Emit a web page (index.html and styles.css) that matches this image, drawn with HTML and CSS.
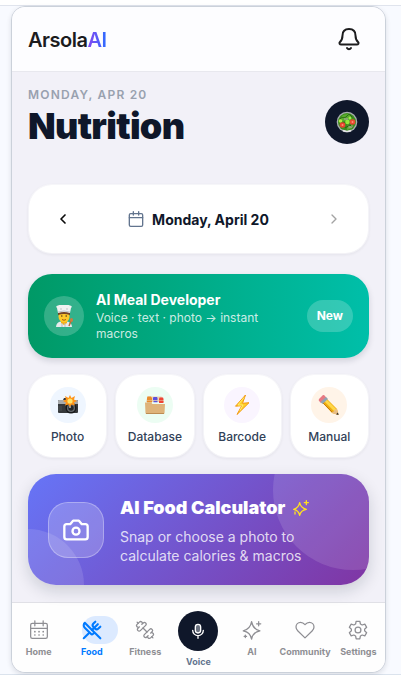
FILE: index.html
```html
<!DOCTYPE html>
<html lang="en">
<head>
<meta charset="UTF-8">
<meta name="viewport" content="width=device-width, initial-scale=1.0">
<title>ArsolaAI - Nutrition</title>
<link rel="stylesheet" href="styles.css">
</head>
<body>
<div class="stage">
<div class="app">
  <header class="topbar">
    <a class="logo" href="#">Arsola<span>AI</span></a>
    <button class="icon-btn" aria-label="Notifications">
      <svg width="24" height="24" viewBox="0 0 24 24" class="line bell"><path d="M4.200 17.400h15.600c1.600 0 2.200-1.200 1.400-2.200C19.400 13.500 18.500 12 18.500 8.500 18.500 4 15.800 2 12 2S5.500 4 5.500 8.500c0 3.500-.9 5-2.700 6.700-.8 1-.2 2.200 1.400 2.200z"/><path d="M10 21c.5.800 1.200 1.200 2 1.200s1.500-.4 2-1.200"/></svg>
    </button>
  </header>

  <main class="content">
    <div class="heading">
      <div>
        <p class="today">MONDAY, APR 20</p>
        <h1>Nutrition</h1>
      </div>
      <button class="avatar" aria-label="Meals">
        <svg width="22" height="22" viewBox="0 0 22 22">
          <circle cx="11" cy="11" r="10.300" fill="#a9adb0"/>
          <circle cx="11" cy="11" r="9" fill="#3c8d1d"/>
          <path d="M3 9l4-5 5-1 4 3-3 4-6 2z" fill="#58ad2c"/>
          <path d="M12 13l5-4 2 3-3 5-5 2z" fill="#68a83c"/>
          <path d="M4 8c2-3 5 0 7-3s4-1 5 2M5 11c3 1 4-1 6 1s4 0 7 2M9 17l5-3 3 3" fill="none" stroke="#265f14"/>
          <circle cx="4.500" cy="10" r="1.800" fill="#b5eb48"/>
          <circle cx="11.500" cy="11" r="2.300" fill="#93e83b"/>
          <circle cx="14" cy="7" r="1.500" fill="#9dec46"/>
          <circle cx="6.500" cy="14" r="2.800" fill="#e8432e"/><circle cx="6.500" cy="14" r="1" fill="#ff9175"/>
          <circle cx="16.500" cy="11" r="2.800" fill="#ea4930"/><circle cx="16.500" cy="11" r="1" fill="#ff9175"/>
          <path d="M12.500 16h4M8 8h4" stroke="#97a581" stroke-width="1.500"/>
          <path d="M7 19.500q4 1.800 8 0" fill="none" stroke="#e5e6e7" stroke-width="1.500"/>
        </svg>
      </button>
    </div>

    <section class="date-card">
      <button class="icon-btn" aria-label="Previous day"><svg width="16" height="16" viewBox="0 0 24 24" class="line arrow"><path d="M15 18l-6-6 6-6"/></svg></button>
      <div class="date">
        <svg width="16" height="16" viewBox="0 0 24 24" class="line cal"><rect x="2" y="4" width="20" height="19" rx="2"/><path d="M8 1v5M16 1v5M2 10h20"/></svg>
        <span>Monday, April 20</span>
      </div>
      <button class="icon-btn" aria-label="Next day" disabled><svg width="16" height="16" viewBox="0 0 24 24" class="line arrow"><path d="M9 18l6-6-6-6"/></svg></button>
    </section>

    <a class="meal-card" href="#">
      <span class="chef">
        <svg width="22" height="22" viewBox="0 0 22 22">
          <path d="M3 22q.3-5 5-5.500h6q4.700.5 5 5.500z" fill="#e8eaec"/>
          <path d="M8 15h6v3l-3 2-3-2z" fill="#f5ad12"/>
          <ellipse cx="11" cy="11.500" rx="5.500" ry="6" fill="#ffc928"/>
          <path d="M5 6h12v4q-6-2-12 0z" fill="#754526"/>
          <path d="M5 8L4 3Q2 1 5 .600 8-1 11 0q3-1 6 .600 3 .400 1 2.400l-1 5q-6-2-12 0z" fill="#f1f1f1"/>
          <path d="M5 7q6-2 12 0M8 3v2M14 3v2" stroke="#bfc5c8" fill="none"/>
          <circle cx="8.800" cy="11" r=".8" fill="#563817"/><circle cx="13.200" cy="11" r=".8" fill="#563817"/>
          <path d="M9 14.500q2 1.500 4 0" stroke="#a55813" fill="none"/>
          <path d="M16 21l2-5" stroke="#b76b34" stroke-width="1.500"/><ellipse cx="18.500" cy="15" rx="1.500" ry="2" fill="#d17a3e"/>
          <path d="M9 18v4M12 18v4" stroke="#b6bbc0"/>
        </svg>
      </span>
      <span class="meal-text">
        <strong>AI Meal Developer</strong>
        <small>Voice · text · photo → instant macros</small>
      </span>
      <span class="badge">New</span>
    </a>

    <div class="quick">
      <button>
        <span class="dot blue"><svg width="22" height="22" viewBox="0 0 22 22">
          <path d="M1 7q0-1 1-1h4l1-2h8l1 2h4q1 0 1 1v11q0 1-1 1H2q-1 0-1-1z" fill="#35383b"/>
          <path d="M1 7q0-1 1-1h18q1 0 1 1v3H1z" fill="#a8abad"/>
          <circle cx="14" cy="14" r="5.500" fill="#17191b"/><circle cx="14" cy="14" r="4" fill="#666b70"/><circle cx="14" cy="14" r="2.700" fill="#22262a"/><circle cx="13" cy="13" r="1" fill="#abb5bd"/>
          <path d="M13 1l1.500 3L18 2l-1 3.500 3 1.500-3 1.500 1 3-3.500-1L13 13l-1.500-2.500-3.500 1 1-3L6 7l3-1.500L8 2l3.500 2z" fill="#ff9417"/><circle cx="13" cy="7" r="2.600" fill="#ffe36a"/>
          <path d="M2 12v5M4 12v5" stroke="#4d5053"/>
        </svg></span>Photo
      </button>
      <button>
        <span class="dot green"><svg width="22" height="22" viewBox="0 0 22 22">
          <path d="M2 8l1.500-5.500h14L20 8z" fill="#e9d3b4"/>
          <path d="M3 4l.5-1.500H7L8 4v2H3z" fill="#e98c2d"/><path d="M9 4l.5-1H13l.5 1v2H9z" fill="#5a50dd"/><path d="M15 5l.5-1.500H19l.5 1.500v1.500H15z" fill="#ee4536"/>
          <path d="M3 7.500h5" stroke="#e98c2d" stroke-width="2"/><path d="M9.500 7.500h4" stroke="#5a50dd" stroke-width="1.500"/><path d="M15 8h4.500" stroke="#ee4536" stroke-width="2"/>
          <path d="M1 8.500h6l1.500 1.500H21l-.5 9.500h-19z" fill="#deb37a"/><path d="M2 19.500h18" stroke="#bd8c53"/>
        </svg></span>Database
      </button>
      <button>
        <span class="dot purple"><svg width="22" height="22" viewBox="0 0 22 22"><path d="M14.500 1L4.500 12.200l6.300-.5L6 20.500 18 8.700l-6.500.6z" fill="#ffce27" stroke="#f39a13" stroke-linejoin="round"/><path d="M13 3.500L7 11h5L9 16.500" fill="none" stroke="#fff070"/></svg></span>Barcode
      </button>
      <button>
        <span class="dot orange"><svg width="22" height="22" viewBox="0 0 22 22">
          <path d="M6 2l13 13 1.500 6L14 19 2 6z" fill="#eda90e"/><path d="M5 4l13 13" stroke="#ffd746" stroke-width="3"/><path d="M3 7l12 12" stroke="#c67b08"/>
          <path d="M19 15l1.500 6L14 19q0-2 2-1.500Q16 15 19 15z" fill="#e9be87"/><path d="M20 18.500l.5 2.500-2.500-.8z" fill="#302b27"/>
          <path d="M5 1L1 5q-1 1 .5 2.500L3 9l5.500-5L7 2Q6 .500 5 1z" fill="#e77982"/><path d="M2.500 8l5.500-5 2 2-5.500 5z" fill="#8fa3b2"/>
        </svg></span>Manual
      </button>
    </div>

    <a class="calc-card" href="#">
      <span class="camera"><svg width="28" height="28" viewBox="0 0 24 24" class="line"><path d="M14.500 4h-5L7 7H4a2 2 0 0 0-2 2v9a2 2 0 0 0 2 2h16a2 2 0 0 0 2-2V9a2 2 0 0 0-2-2h-3z"/><circle cx="12" cy="13" r="3"/></svg></span>
      <span class="calc-text">
        <strong>AI Food Calculator
          <svg width="16" height="16" viewBox="0 0 24 24" class="line spark"><path d="M10 4q1.500 8 10 10-8.500 1.500-10 9-1.500-7.500-9-9 7.500-2 9-10zM20 1v6M17 4h6M3 18v3"/></svg>
        </strong>
        <span>Snap or choose a photo to calculate calories &amp; macros</span>
      </span>
    </a>
  </main>

  <nav class="tabs">
    <a href="#"><span class="tab-icon"><svg width="20" height="20" viewBox="0 0 24 24" class="line"><rect x="2" y="4" width="20" height="18" rx="2"/><path d="M7 1v6M17 1v6M2 10h20"/><path d="M7 14h.1M12 14h.1M17 14h.1M7 18h.1M12 18h.1M17 18h.1" stroke-width="2"/></svg></span>Home</a>
    <a href="#" class="active"><span class="tab-icon"><svg width="20" height="20" viewBox="0 0 24 24" class="line"><path d="M16 2l-2.300 2.300a3 3 0 0 0 0 4.200l1.800 1.800a3 3 0 0 0 4.200 0L22 8"/><path d="M15 15L3.300 3.300a4.200 4.200 0 0 0 0 6l7.300 7.300c.7.700 2 .7 2.800 0L15 15zm0 0l7 7"/><path d="M2.100 21.800l6.400-6.300M19 5l-7 7"/></svg></span>Food</a>
    <a href="#"><span class="tab-icon"><svg width="20" height="20" viewBox="0 0 24 24" class="line"><g transform="matrix(-1 0 0 1 24 0)"><path d="M17.600 12.800a2 2 0 1 0 2.800-2.900l-1.700-1.700a2 2 0 0 0 2.800-2.900l-2.800-2.800a2 2 0 0 0-2.900 2.800l-1.700-1.700a2 2 0 1 0-2.900 2.800z"/><path d="M2.500 21.500l1.400-1.400M20.100 3.900l1.400-1.400"/><path d="M5.300 21.500a2 2 0 1 0 2.900-2.800l1.700 1.700a2 2 0 1 0 2.900-2.800l-6.400-6.400a2 2 0 1 0-2.800 2.900l1.700 1.700a2 2 0 0 0-2.800 2.900z"/><path d="M9.600 14.400l4.800-4.800"/></g></svg></span>Fitness</a>
    <a href="#" class="voice"><span class="mic"><svg width="16" height="16" viewBox="0 0 24 24" class="line"><rect x="8" y="2" width="8" height="13" rx="4" fill="#6b7280"/><path d="M4 11a8 8 0 0 0 16 0M12 19v4"/></svg></span>Voice</a>
    <a href="#"><span class="tab-icon"><svg width="20" height="20" viewBox="0 0 24 24" class="line"><path d="M11.500 2q1.500 9 10 11-8.500 1.500-10 10-1.500-8.500-10-10 8.500-2 10-11zM20 2v5M17.500 4.500h5M4 18v3M2.500 19.500h3"/></svg></span>AI</a>
    <a href="#"><span class="tab-icon"><svg width="20" height="20" viewBox="0 0 24 24" class="line"><path d="M12 21.500l-8.500-8.300C1.800 11.500 1.200 10 1.200 8.300c0-3.200 2.500-5.600 5.500-5.600 2.200 0 3.600.9 5.300 2.900 1.700-2 3.100-2.900 5.300-2.900 3 0 5.500 2.400 5.500 5.600 0 1.700-.6 3.200-2.300 4.900z"/></svg></span>Community</a>
    <a href="#"><span class="tab-icon"><svg width="20" height="20" viewBox="0 0 24 24" class="line"><path d="M9.800 1.500h4.400l.7 3.300 2.100 1.200 3.200-1 2.200 3.800-2.500 2.200v2l2.500 2.200-2.200 3.800-3.200-1-2.100 1.200-.7 3.300H9.800l-.7-3.300L7 18l-3.200 1-2.200-3.800L4.100 13v-2L1.600 8.800 3.800 5 7 6l2.100-1.200z"/><circle cx="12" cy="12" r="3.500"/></svg></span>Settings</a>
  </nav>
</div>
</div>
</body>
</html>
```
FILE: styles.css
```css
* {
  box-sizing: border-box;
}
body {
  margin: 0;
  padding: 5px 0 0;
  background: #fff;
  color: #0f172a;
  font-family: Inter, "Liberation Sans", sans-serif;
}
a {
  color: inherit;
  text-decoration: none;
}
button {
  font-family: inherit;
  color: inherit;
  border: none;
  padding: 0;
  cursor: pointer;
}
svg {
  display: block;
  flex: none;
}
.line {
  fill: none;
  stroke: currentColor;
  stroke-width: 2;
  stroke-linecap: round;
  stroke-linejoin: round;
}
.stage {
  padding: 0 15px 1px 11px;
  background: #f8faff;
  border-top: 1px solid #e0e4ed;
  border-bottom: 1px solid #dbe3ed;
  box-shadow: 0 8px 0 #f8faff;
}
.app {
  overflow: hidden;
  background: #f2f1f8;
  border: 1px solid #cbd1da;
  border-radius: 14px;
  box-shadow: 0 2px 5px rgba(15, 23, 42, 0.12);
}

/* header */
.topbar {
  display: flex;
  align-items: center;
  justify-content: space-between;
  height: 65px;
  padding: 0 16px;
  background: #fdfdff;
  border-bottom: 1px solid #e8e8ee;
}
.logo {
  padding-top: 2px;
  font-size: 20px;
  font-weight: 600;
  letter-spacing: -0.5px;
  color: #1c1c1e;
}
.logo span {
  background: linear-gradient(to right, #8b45ef, #2f6bff);
  background-clip: text;
  color: transparent;
}
.icon-btn {
  display: flex;
  align-items: center;
  justify-content: center;
  width: 40px;
  height: 40px;
  background: none;
}
.bell {
  color: #1c1c1e;
}

/* page content */
.content {
  display: flex;
  flex-direction: column;
  gap: 16px;
  padding: 15px 16px 17px;
}
.heading {
  display: flex;
  align-items: flex-end;
  justify-content: space-between;
  margin-bottom: 24px;
}
.today {
  margin: 0;
  font-size: 12px;
  line-height: 16px;
  font-weight: 600;
  letter-spacing: 1.2px;
  color: #99a1af;
}
h1 {
  margin: 5px 0 0;
  font-size: 36px;
  line-height: 36px;
  font-weight: 900;
  letter-spacing: -0.7px;
}
.avatar {
  display: flex;
  align-items: center;
  justify-content: center;
  width: 44px;
  height: 44px;
  border-radius: 50%;
  background: #0f172a;
}
.date-card {
  display: flex;
  align-items: center;
  justify-content: space-between;
  height: 70px;
  padding: 0 14px;
  margin-bottom: 4px;
  background: #fff;
  background-clip: padding-box;
  border: 1px solid rgba(255, 255, 255, 0.5);
  border-radius: 24px;
  box-shadow: 0 1px 3px rgba(15, 23, 42, 0.06);
}
.arrow {
  stroke-width: 2.5;
  color: #0a0a0a;
}
.icon-btn:disabled .arrow {
  stroke-width: 2;
  color: #a3a3a3;
}
.date {
  display: flex;
  align-items: center;
  gap: 8px;
  font-size: 14px;
  font-weight: 700;
}
.cal {
  color: #62748e;
}

/* AI meal developer */
.meal-card {
  display: flex;
  align-items: center;
  gap: 12px;
  padding: 16px;
  background: linear-gradient(to right, #009966, #00bfa9);
  border-radius: 24px;
  color: #fff;
  box-shadow: 0 3px 6px rgba(15, 23, 42, 0.14);
}
.chef {
  display: flex;
  flex: none;
  align-items: center;
  justify-content: center;
  width: 40px;
  height: 40px;
  border-radius: 50%;
  background: rgba(255, 255, 255, 0.2);
}
.meal-text {
  flex: 1;
}
.meal-text strong {
  display: block;
  font-size: 14px;
  line-height: 20px;
  font-weight: 700;
}
.meal-text small {
  display: block;
  font-size: 12px;
  line-height: 16px;
  color: rgba(255, 255, 255, 0.8);
}
.badge {
  padding: 8px 10px;
  border-radius: 16px;
  background: rgba(255, 255, 255, 0.2);
  font-size: 12px;
  line-height: 16px;
  font-weight: 700;
}

/* quick actions */
.quick {
  display: grid;
  grid-template-columns: repeat(4, 1fr);
  gap: 8px;
}
.quick button {
  display: flex;
  flex-direction: column;
  align-items: center;
  gap: 6px;
  padding: 12px 0;
  background: #fff;
  background-clip: padding-box;
  border: 1px solid rgba(255, 255, 255, 0.5);
  border-radius: 24px;
  box-shadow: 0 1px 3px rgba(15, 23, 42, 0.06);
  font-size: 12px;
  line-height: 16px;
  font-weight: 500;
  color: #314158;
}
.dot {
  display: flex;
  align-items: center;
  justify-content: center;
  width: 36px;
  height: 36px;
  border-radius: 50%;
}
.blue {
  background: #eff6ff;
}
.green {
  background: #ecfdf3;
}
.purple {
  background: #faf5ff;
}
.orange {
  background: #fff4e8;
}

/* food calculator */
.calc-card {
  position: relative;
  display: flex;
  align-items: center;
  gap: 16px;
  padding: 20px;
  overflow: hidden;
  background: linear-gradient(135deg, #6675f7, #8035a3);
  border-radius: 28px;
  color: #fff;
  box-shadow: 0 6px 16px rgba(15, 23, 42, 0.16);
}
.calc-card::before,
.calc-card::after {
  content: "";
  position: absolute;
  border-radius: 50%;
  background: rgba(255, 255, 255, 0.12);
}
.calc-card::before {
  top: -64px;
  right: -64px;
  width: 160px;
  height: 160px;
}
.calc-card::after {
  bottom: -56px;
  left: -56px;
  width: 112px;
  height: 112px;
}
.camera {
  display: flex;
  flex: none;
  align-items: center;
  justify-content: center;
  width: 56px;
  height: 56px;
  border: 1px solid rgba(255, 255, 255, 0.3);
  border-radius: 20px;
  background: rgba(255, 255, 255, 0.2);
}
.calc-text {
  position: relative;
  z-index: 1;
  flex: 1;
  padding-right: 20px;
  font-size: 14px;
  line-height: 19px;
  color: rgba(255, 255, 255, 0.8);
}
.calc-text strong {
  display: flex;
  align-items: center;
  gap: 8px;
  margin-bottom: 5px;
  font-size: 18px;
  line-height: 28px;
  font-weight: 900;
  color: #fff;
}
.spark {
  color: #ffdf20;
}

/* bottom tabs */
.tabs {
  display: grid;
  grid-template-columns: repeat(7, minmax(0, 1fr));
  padding: 8px 0 4px;
  background: #fefefe;
  border-top: 1px solid #e0e0e6;
}
.tabs a {
  display: flex;
  flex-direction: column;
  align-items: center;
  gap: 2px;
  padding-top: 5px;
  font-size: 9px;
  line-height: 12px;
  font-weight: 700;
  color: #8e8e93;
}
.tab-icon {
  display: flex;
  align-items: center;
  justify-content: center;
  height: 28px;
}
.tab-icon .line {
  stroke-width: 1.5;
}
.tabs .active {
  color: #007aff;
}
.active .tab-icon {
  width: 36px;
  margin-left: 16px;
  padding-right: 16px;
  border-radius: 14px;
  background: #dceaff;
}
.active .tab-icon .line {
  stroke-width: 2.5;
}
.tabs .voice {
  gap: 5px;
  padding-top: 0;
  color: #62748e;
}
.mic {
  display: flex;
  align-items: center;
  justify-content: center;
  width: 40px;
  height: 40px;
  border-radius: 50%;
  background: #0f172a;
  color: #fff;
}
```
